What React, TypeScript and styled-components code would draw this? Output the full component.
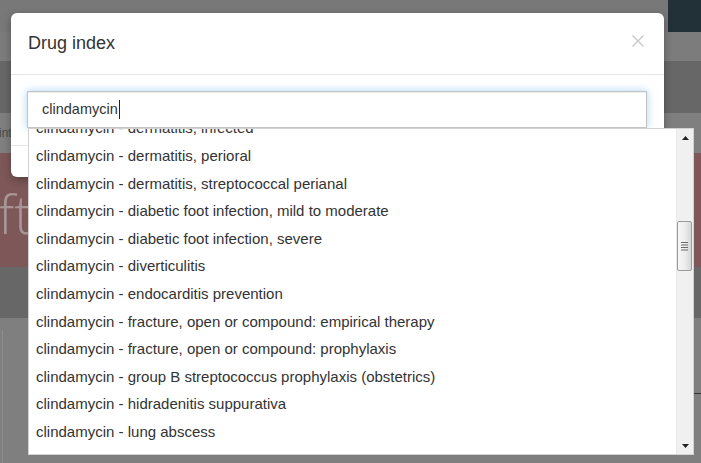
import React, { useLayoutEffect, useRef } from "react";
import styled, { createGlobalStyle } from "styled-components";

const ROW_HEIGHT = 27.6;

const earlier = [
  "bacterial vaginosis",
  "bite wound",
  "cellulitis",
  "dental infection",
];

const results = [
  "dermatitis, infected",
  "dermatitis, perioral",
  "dermatitis, streptococcal perianal",
  "diabetic foot infection, mild to moderate",
  "diabetic foot infection, severe",
  "diverticulitis",
  "endocarditis prevention",
  "fracture, open or compound: empirical therapy",
  "fracture, open or compound: prophylaxis",
  "group B streptococcus prophylaxis (obstetrics)",
  "hidradenitis suppurativa",
  "lung abscess",
  "malaria",
  "mastoiditis",
];

const GlobalStyle = createGlobalStyle`
  html, body {
    margin: 0;
    padding: 0;
    background: #7f7f7f;
    overflow: hidden;
  }
  body {
    font-family: "Liberation Sans", Arial, sans-serif;
  }
`;

const Page = styled.div`
  position: relative;
  width: 701px;
  height: 463px;
  display: flex;
  flex-direction: column;
  overflow: hidden;
`;

const Band = styled.div<{ $h: number; $bg: string }>`
  flex: 0 0 ${(p) => p.$h}px;
  background: ${(p) => p.$bg};
  display: flex;
  align-items: center;
  overflow: hidden;
`;

const TopBar = styled(Band)`
  justify-content: flex-end;
  align-items: stretch;
`;

const NavBlock = styled.div`
  width: 33px;
  background: #223038;
`;

const CrumbText = styled.span`
  font-size: 12px;
  color: #4a4a4a;
  margin-left: -1px;
`;

const HeroText = styled.span`
  font-family: "Open Sans", "Liberation Sans", sans-serif;
  font-weight: 300;
  font-size: 54px;
  line-height: 1;
  color: #a89595;
  margin-left: -2px;
  margin-top: 6px;
`;

const Lower = styled.div`
  flex: 1;
  display: flex;
  padding: 12px 0 0 2px;
`;

const CardEdge = styled.div`
  flex: 1;
  border-left: 1px solid #8c8c8c;
  display: flex;
  justify-content: flex-end;
  align-items: flex-start;
  padding-top: 63px;
`;

const RuleStub = styled.div`
  width: 8px;
  height: 1px;
  background: #333;
`;

const Modal = styled.div`
  position: absolute;
  top: 13px;
  left: 11px;
  width: 653px;
  height: 164px;
  background: #fff;
  border-radius: 6px;
  box-shadow: 0 3px 9px rgba(0, 0, 0, 0.3);
  display: flex;
  flex-direction: column;
`;

const Header = styled.div`
  height: 61px;
  border-bottom: 1px solid #e5e5e5;
  display: flex;
  align-items: center;
  justify-content: space-between;
  padding: 0 20px 0 17px;
  box-sizing: content-box;
`;

const Title = styled.h4`
  margin: 0 0 1px;
  font-size: 18px;
  font-weight: normal;
  color: #333;
`;

const CloseButton = styled.button`
  border: 0;
  background: none;
  padding: 0;
  width: 12px;
  height: 12px;
  display: flex;
  margin-bottom: 6px;
`;

const Body = styled.div`
  padding: 16px 17px 17px 16px;
`;

const Field = styled.div`
  position: relative;
`;

const SearchBox = styled.div`
  height: 37px;
  box-sizing: border-box;
  border: 1px solid #c4c4c4;
  box-shadow: inset 0 1px 1px rgba(0, 0, 0, 0.075),
    0 0 8px rgba(102, 175, 233, 0.55);
  display: flex;
  align-items: center;
  padding: 0 13px 1px 14px;
  font-size: 14.5px;
  color: #333;
`;

const Caret = styled.span`
  width: 1px;
  height: 19px;
  background: #222;
  margin-left: 1px;
`;

const Footer = styled.div`
  flex: 1;
  border-top: 1px solid #e5e5e5;
`;

const Dropdown = styled.div`
  position: absolute;
  top: 100%;
  left: 1px;
  width: 666px;
  height: 327px;
  box-sizing: border-box;
  background: #fff;
  border: 1px solid #d2d2d2;
  display: flex;
  z-index: 2;
`;

const Viewport = styled.ul`
  flex: 1;
  margin: 0;
  padding: 0;
  list-style: none;
  overflow: hidden;
`;

const Item = styled.li`
  height: ${ROW_HEIGHT}px;
  line-height: ${ROW_HEIGHT}px;
  padding-left: 7px;
  font-size: 15px;
  color: #333;
  white-space: nowrap;
`;

const Scrollbar = styled.div`
  width: 17px;
  background: #f0f0f0;
  border-left: 1px solid #e8e8e8;
  box-sizing: border-box;
  display: flex;
  flex-direction: column;
`;

const ArrowButton = styled.div`
  height: 17px;
  display: flex;
  align-items: center;
  justify-content: center;
`;

const Track = styled.div`
  flex: 1;
  padding: 75px 1px 0 0;
`;

const Thumb = styled.div<{ $h: number }>`
  height: ${(p) => p.$h}px;
  box-sizing: border-box;
  border: 1px solid #9a9a9a;
  border-radius: 2px;
  background: linear-gradient(to right, #f7f7f7 0%, #ececec 55%, #d6d6d6 100%);
  display: flex;
  align-items: center;
  justify-content: center;
`;

const Arrow = ({ up }: { up?: boolean }) => (
  <svg width="7" height="4" viewBox="0 0 7 4">
    <polygon points={up ? "3.5,0 7,4 0,4" : "0,0 7,0 3.5,4"} fill="#222" />
  </svg>
);

const Grip = () => (
  <svg width="7" height="9" viewBox="0 0 7 9">
    {[0.5, 3, 5.5, 8].map((y) => (
      <line key={y} x1="0" y1={y} x2="7" y2={y} stroke="#6a6a6a" strokeWidth="1" />
    ))}
  </svg>
);

const CloseIcon = () => (
  <svg width="12" height="12" viewBox="0 0 12 12">
    <path d="M0.5 0.5 L11.5 11.5 M11.5 0.5 L0.5 11.5" stroke="#c8c8c8" strokeWidth="1.4" />
  </svg>
);

const ResultList = () => {
  const ref = useRef<HTMLUListElement>(null);
  useLayoutEffect(() => {
    if (ref.current) ref.current.scrollTop = earlier.length * ROW_HEIGHT + 14.4;
  }, []);
  return (
    <Viewport ref={ref}>
      {[...earlier, ...results].map((r) => (
        <Item key={r}>clindamycin - {r}</Item>
      ))}
    </Viewport>
  );
};

export default function App() {
  return (
    <>
      <GlobalStyle />
      <Page>
        <TopBar $h={32} $bg="#787878">
          <NavBlock />
        </TopBar>
        <Band $h={29} $bg="#7c7c7c" />
        <Band $h={52} $bg="#676767" />
        <Band $h={40} $bg="#7f7f7f">
          <CrumbText>int</CrumbText>
        </Band>
        <Band $h={114} $bg="#7e5858">
          <HeroText>ft</HeroText>
        </Band>
        <Band $h={51} $bg="#676767" />
        <Lower>
          <CardEdge>
            <RuleStub />
          </CardEdge>
        </Lower>

        <Modal>
          <Header>
            <Title>Drug index</Title>
            <CloseButton aria-label="Close">
              <CloseIcon />
            </CloseButton>
          </Header>
          <Body>
            <Field>
              <SearchBox>
                clindamycin
                <Caret />
              </SearchBox>
              <Dropdown>
                <ResultList />
                <Scrollbar>
                  <ArrowButton>
                    <Arrow up />
                  </ArrowButton>
                  <Track>
                    <Thumb $h={50}>
                      <Grip />
                    </Thumb>
                  </Track>
                  <ArrowButton>
                    <Arrow />
                  </ArrowButton>
                </Scrollbar>
              </Dropdown>
            </Field>
          </Body>
          <Footer />
        </Modal>
      </Page>
    </>
  );
}
